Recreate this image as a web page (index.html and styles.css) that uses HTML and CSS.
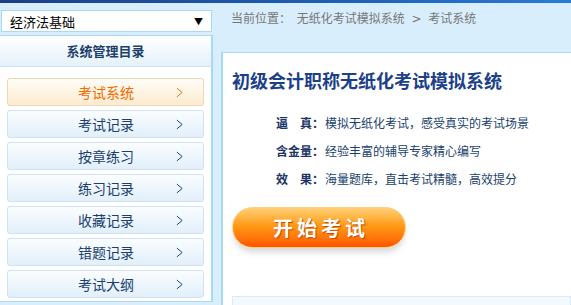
FILE: index.html
```html
<!DOCTYPE html>
<html lang="zh-CN">
<head>
  <meta charset="UTF-8" />
  <title>初级会计职称无纸化考试模拟系统</title>
  <link rel="stylesheet" href="styles.css">
</head>
<body>

<div class="topbar"></div>

<div class="page">
  <aside class="sidebar">
    <div class="subject-select">
      <span>经济法基础</span>
      <span class="caret">▼</span>
    </div>

    <div class="menu-panel">
      <div class="menu-title">系统管理目录</div>
      <ul class="menu">
        <li class="menu-item active"><span>考试系统</span><svg class="chev" viewBox="0 0 8 12"><polyline points="1,1 7,6 1,11" /></svg></li>
        <li class="menu-item"><span>考试记录</span><svg class="chev" viewBox="0 0 8 12"><polyline points="1,1 7,6 1,11" /></svg></li>
        <li class="menu-item"><span>按章练习</span><svg class="chev" viewBox="0 0 8 12"><polyline points="1,1 7,6 1,11" /></svg></li>
        <li class="menu-item"><span>练习记录</span><svg class="chev" viewBox="0 0 8 12"><polyline points="1,1 7,6 1,11" /></svg></li>
        <li class="menu-item"><span>收藏记录</span><svg class="chev" viewBox="0 0 8 12"><polyline points="1,1 7,6 1,11" /></svg></li>
        <li class="menu-item"><span>错题记录</span><svg class="chev" viewBox="0 0 8 12"><polyline points="1,1 7,6 1,11" /></svg></li>
        <li class="menu-item"><span>考试大纲</span><svg class="chev" viewBox="0 0 8 12"><polyline points="1,1 7,6 1,11" /></svg></li>
      </ul>
    </div>
  </aside>

  <main class="main">
    <div class="crumbs">
      <span class="crumb-label">当前位置：</span>
      <span>无纸化考试模拟系统</span>
      <span class="sep">&gt;</span>
      <span>考试系统</span>
    </div>

    <div class="content">
      <h1 class="title">初级会计职称无纸化考试模拟系统</h1>

      <ul class="features">
        <li><b class="label">逼<em></em>真：</b>模拟无纸化考试，感受真实的考试场景</li>
        <li><b class="label">含金量：</b>经验丰富的辅导专家精心编写</li>
        <li><b class="label">效<em></em>果：</b>海量题库，直击考试精髓，高效提分</li>
      </ul>

      <button class="start-btn" type="button">开始考试</button>

      <div class="info-box"></div>
    </div>
  </main>
</div>

</body>
</html>
```

FILE: styles.css
```css
body {
  margin: 0;
  padding: 0;
  background: #d9eefd;
  font-family: "Noto Sans CJK SC", "Liberation Sans", sans-serif;
  font-size: 12px;
  overflow: hidden;
}

.topbar {
  height: 3px;
  background: linear-gradient(to right, #1b3f86, #1f5fb8 60%, #2a7bd8);
}

.page {
  display: flex;
  height: 302px;
}

/* left column */
.sidebar {
  width: 213px;
  flex-shrink: 0;
  padding-top: 7px;
}

.subject-select {
  margin: 0 1px 0 1px;
  height: 20px;
  border: 1px solid #a9d9f7;
  background: #fff;
  display: flex;
  align-items: center;
  justify-content: space-between;
  padding: 0 8px 0 8px;
  font-size: 13px;
  color: #000;
}

.caret {
  font-size: 9px;
}

.menu-panel {
  margin-top: 3px;
  height: 265px;
  background: #fff;
  border: 1px solid #a9d9f7;
  border-left: none;
  border-right-width: 2px;
}

.menu-title {
  height: 30px;
  line-height: 30px;
  text-align: center;
  font-size: 13px;
  font-weight: bold;
  color: #1e3f6a;
  background: linear-gradient(to bottom, #ffffff, #e4f1fb);
  border-bottom: 1px solid #c8e3f7;
}

.menu {
  list-style: none;
  margin: 0;
  padding: 11px 0 0 7px;
  display: flex;
  flex-direction: column;
  gap: 4px;
}

.menu-item {
  width: 195px;
  height: 26px;
  border: 1px solid #cfe3f4;
  border-radius: 3px;
  background: linear-gradient(to bottom, #fbfdff, #e1effb);
  display: flex;
  align-items: center;
  font-size: 14px;
  color: #1a3f6e;
}

.menu-item span {
  margin-left: 70px;
  width: 98px;
}

.menu-item .chev {
  width: 7px;
  height: 11px;
  fill: none;
  stroke: currentColor;
  stroke-width: 1.1;
}

.menu-item.active {
  border-color: #efd6b4;
  background: linear-gradient(to bottom, #fffdf8, #fcebcf);
  color: #f06a00;
}

/* right column */
.main {
  flex: 1;
  min-width: 0;
  padding-left: 8px;
  display: flex;
  flex-direction: column;
}

.crumbs {
  flex-shrink: 0;
  height: 49px;
  line-height: 30px;
  padding-left: 10px;
  color: #777;
  font-size: 12px;
}

.crumb-label {
  margin-right: 3px;
}

.sep {
  margin: 0 4px;
  font-family: "DejaVu Sans", sans-serif;
}

.content {
  flex: 1;
  min-height: 0;
  overflow: hidden;
  background: #fff;
  border-top: 1px solid #a6d8f8;
  border-left: 2px solid #a6d8f8;
  padding-left: 9px;
}

.title {
  margin: 14px 0 0 0;
  font-size: 18px;
  font-weight: bold;
  color: #1c4189;
  line-height: 26px;
}

.features {
  list-style: none;
  margin: 16px 0 0 44px;
  padding: 0;
  color: #1a3f6e;
  font-size: 12px;
}

.features li {
  height: 28px;
  line-height: 28px;
}

.features .label {
  display: inline-block;
  width: 49px;
  font-weight: bold;
  color: #1a3566;
}

.features .label em {
  display: inline-block;
  width: 12px;
}

.start-btn {
  display: block;
  margin-top: 14px;
  width: 174px;
  height: 41px;
  border: 1px solid #ffd07a;
  border-radius: 21px;
  background:
    linear-gradient(to bottom, rgba(255, 255, 255, 0.35), rgba(255, 255, 255, 0) 45%),
    linear-gradient(to bottom, #ffb52c, #ff9614 50%, #ff6a06 85%, #ff5200);
  box-shadow: 0 6px 6px -2px rgba(140, 140, 140, 0.35);
  color: #fff;
  font-family: "Noto Sans CJK SC", sans-serif;
  font-size: 20px;
  font-weight: bold;
  letter-spacing: 4px;
  text-indent: 4px;
  text-shadow: 1px 1px 1px #c04a00;
  cursor: pointer;
}

.info-box {
  margin-top: 48px;
  height: 20px;
  border: 1px solid #d6ebfb;
  background: #f4f9fe;
}
```
